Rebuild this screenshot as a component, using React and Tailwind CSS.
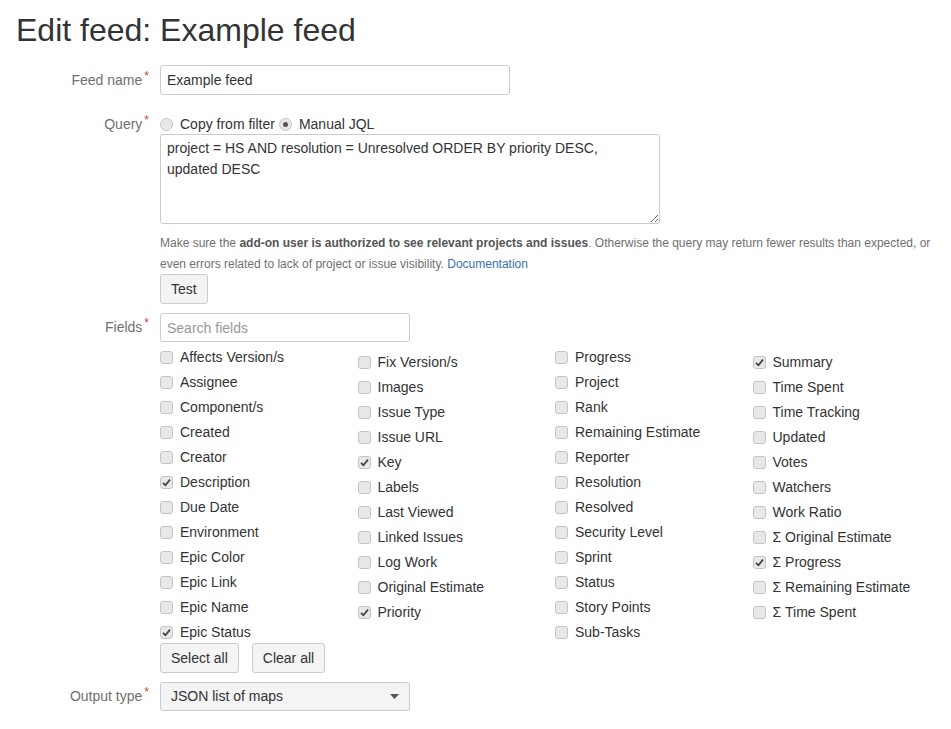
import React from "react";

const col1 = [
  ["Affects Version/s"], ["Assignee"], ["Component/s"], ["Created"], ["Creator"],
  ["Description", true], ["Due Date"], ["Environment"], ["Epic Color"], ["Epic Link"],
  ["Epic Name"], ["Epic Status", true],
];
const col2 = [
  ["Fix Version/s"], ["Images"], ["Issue Type"], ["Issue URL"], ["Key", true], ["Labels"],
  ["Last Viewed"], ["Linked Issues"], ["Log Work"], ["Original Estimate"], ["Priority", true],
];
const col3 = [
  ["Progress"], ["Project"], ["Rank"], ["Remaining Estimate"], ["Reporter"], ["Resolution"],
  ["Resolved"], ["Security Level"], ["Sprint"], ["Status"], ["Story Points"], ["Sub-Tasks"],
];
const col4 = [
  ["Summary", true], ["Time Spent"], ["Time Tracking"], ["Updated"], ["Votes"], ["Watchers"],
  ["Work Ratio"], ["Σ Original Estimate"], ["Σ Progress", true], ["Σ Remaining Estimate"],
  ["Σ Time Spent"],
];

const Checkbox = ({ checked }) => (
  <span className="w-[13px] h-[13px] rounded-[3px] border border-[#c4c4c4] bg-[#e8e8e8] flex items-center justify-center shrink-0">
    {checked && (
      <svg width="9" height="9" viewBox="0 0 9 9">
        <path d="M1 4.8 L3.4 7.2 L8 1.6" fill="none" stroke="#444" strokeWidth="1.8" />
      </svg>
    )}
  </span>
);

const Radio = ({ checked }) => (
  <span className="w-[13px] h-[13px] rounded-full border border-[#c4c4c4] bg-[#e8e8e8] flex items-center justify-center shrink-0">
    {checked && <span className="w-[5px] h-[5px] rounded-full bg-[#555]" />}
  </span>
);

const Label = ({ children }) => (
  <div className="w-[150px] shrink-0 text-right text-[14px] text-[#707070] pr-[1px]">
    {children}
    <span className="text-[#d04437] text-[12px] relative top-[-5px] ml-[2px]">*</span>
  </div>
);

const FieldCol = ({ items, offset }) => (
  <div className={offset ? "pt-[5px]" : ""}>
    {items.map(([name, checked]) => (
      <div key={name} className="h-[20px] mt-[5px] flex items-center gap-[7px] text-[14px] text-[#333]">
        <Checkbox checked={checked} />
        <span>{name}</span>
      </div>
    ))}
  </div>
);

const btn =
  "h-[30px] px-[10px] border border-[#ccc] rounded-[3px] bg-[#f4f4f4] text-[14px] text-[#333]";

export default function App() {
  return (
    <div className="bg-white min-h-[729px] pt-[13px] font-['Liberation_Sans',Arial,sans-serif] text-[#333]">
      <h1 className="pl-[16px] text-[32px] leading-[35px] text-[#333]">Edit feed: Example feed</h1>

      <div className="flex items-center gap-[10px] mt-[17px]">
        <Label>Feed name</Label>
        <input
          defaultValue="Example feed"
          className="w-[350px] h-[30px] border border-[#ccc] rounded-[3px] px-[6px] text-[14px] text-[#333] outline-none"
        />
      </div>

      <div className="flex gap-[10px] mt-[19px]">
        <div className="h-[20px] flex items-center">
          <Label>Query</Label>
        </div>
        <div>
          <div className="h-[20px] flex items-center text-[14px] text-[#333]">
            <Radio />
            <span className="ml-[7px]">Copy from filter</span>
            <span className="ml-[4px]"><Radio checked /></span>
            <span className="ml-[7px]">Manual JQL</span>
          </div>
          <textarea
            defaultValue="project = HS AND resolution = Unresolved ORDER BY priority DESC, updated DESC"
            className="block w-[500px] h-[90px] border border-[#ccc] rounded-[3px] pl-[6px] pr-[14px] py-[3px] text-[14px] leading-[21px] text-[#333] outline-none"
          />
          <p className="mt-[9px] w-[780px] text-[12px] leading-[21px] text-[#707070]">
            Make sure the <b className="text-[#555]">add-on user is authorized to see relevant projects and issues</b>.
            Otherwise the query may return fewer results than expected, or even errors related to lack of project
            or issue visibility. <a className="text-[#3572b0]">Documentation</a>
          </p>
          <button className={`${btn} -mt-[1px]`}>Test</button>
        </div>
      </div>

      <div className="flex gap-[10px] mt-[9px]">
        <div className="h-[29px] flex items-center">
          <Label>Fields</Label>
        </div>
        <div>
          <input
            placeholder="Search fields"
            className="w-[250px] h-[29px] border border-[#ccc] rounded-[3px] px-[6px] text-[14px] text-[#333] placeholder:text-[#999] outline-none"
          />
          <div className="grid grid-cols-4 w-[790px]">
            <FieldCol items={col1} />
            <FieldCol items={col2} offset />
            <FieldCol items={col3} />
            <FieldCol items={col4} offset />
          </div>
          <div className="flex gap-[13px] mt-[1px]">
            <button className={btn}>Select all</button>
            <button className={btn}>Clear all</button>
          </div>
        </div>
      </div>

      <div className="flex items-center gap-[10px] mt-[9px]">
        <Label>Output type</Label>
        <div className="w-[250px] h-[29px] border border-[#ccc] rounded-[3px] bg-[#f4f4f4] pl-[10px] pr-[10px] flex items-center justify-between text-[14px] text-[#333]">
          <span>JSON list of maps</span>
          <svg width="9" height="5" viewBox="0 0 9 5">
            <path d="M0 0 H9 L4.5 5 Z" fill="#555" />
          </svg>
        </div>
      </div>
    </div>
  );
}
